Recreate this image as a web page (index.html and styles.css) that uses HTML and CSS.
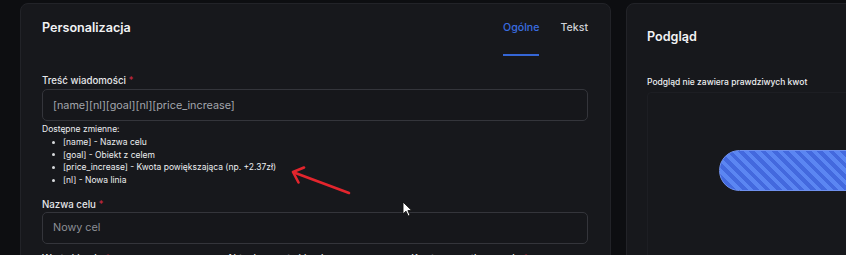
FILE: index.html
```html
<!DOCTYPE html>
<html lang="pl">
<head>
<meta charset="utf-8">
<title>Personalizacja</title>
<link rel="stylesheet" href="styles.css">
</head>
<body>
<div class="layout">
  <section class="card card-main">
    <header class="card-head">
      <h2 class="title">Personalizacja</h2>
      <nav class="tabs">
        <span class="tab tab-active">Ogólne</span>
        <span class="tab">Tekst</span>
      </nav>
    </header>

    <div class="field">
      <label class="label">Treść wiadomości <span class="req">*</span></label>
      <div class="input">[name][nl][goal][nl][price_increase]</div>
    </div>

    <div class="vars">
      <div class="vars-title">Dostępne zmienne:</div>
      <ul class="vars-list">
        <li>[name] - Nazwa celu</li>
        <li>[goal] - Obiekt z celem</li>
        <li>[price_increase] - Kwota powiększająca (np. +2.37zł)</li>
        <li>[nl] - Nowa linia</li>
      </ul>
    </div>

    <div class="field field-name">
      <label class="label">Nazwa celu <span class="req">*</span></label>
      <div class="input input-placeholder">Nowy cel</div>
    </div>

    <div class="row3">
      <label class="label">Wartość celu <span class="req">*</span></label>
      <label class="label">Aktualna wartość celu</label>
      <label class="label">Kwota początkowa celu <span class="req">*</span></label>
    </div>

    <svg class="annot-arrow" width="70" height="32" viewBox="0 0 70 32">
      <path d="M63 27 L8 6.5" stroke="#e3252d" stroke-width="2.6" stroke-linecap="round" fill="none"/>
      <path d="M18 1.5 L7 6 L12.5 16.5" stroke="#e3252d" stroke-width="2.6" stroke-linecap="round" stroke-linejoin="round" fill="none"/>
    </svg>
    <svg class="cursor" width="11" height="16" viewBox="0 0 11 16">
      <path d="M1 1 L1 13 L4 10.2 L6.2 15 L8 14.2 L5.9 9.6 L9.8 9.6 Z" fill="#ffffff" stroke="#111" stroke-width="0.9" stroke-linejoin="round"/>
    </svg>
  </section>

  <section class="card card-preview">
    <h2 class="title">Podgląd</h2>
    <p class="preview-note">Podgląd nie zawiera prawdziwych kwot</p>
    <div class="preview-box">
      <div class="progress"></div>
    </div>
  </section>
</div>
</body>
</html>
```

FILE: styles.css
```css
* { box-sizing: border-box; }

html, body {
  margin: 0;
  padding: 0;
  height: 255px;
  overflow: hidden;
  background: #0d0e11;
  font-family: Inter, "Noto Sans", "Liberation Sans", sans-serif;
  color: #e8e9ec;
}

.layout {
  display: flex;
  gap: 15px;
  padding: 3px 0 0 20px;
  width: 1100px;
}

.card {
  background: #17181c;
  border: 1px solid #222328;
  border-radius: 8px;
  height: 400px;
  flex: none;
}

.card-main {
  position: relative;
  width: 591px;
  padding: 15px 22px 0 21px;
}

.card-head {
  display: flex;
  justify-content: space-between;
  align-items: flex-start;
}

.title {
  margin: 0;
  font-size: 12.6px;
  line-height: 18px;
  font-weight: 600;
  color: #f1f2f4;
}

.tabs {
  display: flex;
  gap: 21px;
}

.tab {
  font-size: 10.6px;
  line-height: 18px;
  font-weight: 500;
  color: #cfd1d6;
  padding-bottom: 17px;
  border-bottom: 2px solid transparent;
}

.tab-active {
  color: #3a6de0;
  border-bottom-color: #3566d6;
}

.field {
  margin-top: 18px;
}

.field-name {
  margin-top: 11px;
}

.label {
  display: block;
  font-size: 9.7px;
  line-height: 14px;
  font-weight: 500;
  color: #e6e7ea;
  margin-bottom: 1px;
  white-space: nowrap;
}

.field-name .label { margin-bottom: 0; }

.req { color: #c4273f; }

.input {
  height: 32px;
  border: 1px solid #34353b;
  border-radius: 5px;
  background: #16171b;
  padding: 0 10px;
  display: flex;
  align-items: center;
  font-size: 10.8px;
  color: #a3a6ad;
}

.input-placeholder { color: #8c8f96; }

.vars {
  margin-top: 2px;
  font-size: 8.5px;
  line-height: 12.8px;
  color: #eceef0;
}

.vars-list {
  list-style: none;
  margin: 0;
  padding: 0;
}

.vars-list li {
  display: flex;
  align-items: center;
}

.vars-list li::before {
  content: "";
  width: 3px;
  height: 3px;
  border-radius: 50%;
  background: #d8dadd;
  margin: 0 8px 0 10px;
  flex: none;
}

.row3 {
  display: grid;
  grid-template-columns: repeat(3, 1fr);
  gap: 8px;
  margin-top: 8px;
}

.annot-arrow {
  position: absolute;
  left: 265px;
  top: 162px;
}

.cursor {
  position: absolute;
  left: 381px;
  top: 197px;
}

.card-preview {
  width: 420px;
  padding: 24px 0 0 20px;
}

.preview-note {
  margin: 30px 0 0;
  font-size: 8.5px;
  line-height: 12px;
  font-weight: 500;
  color: #eceef0;
}

.preview-box {
  margin-top: 4px;
  height: 200px;
  border: 1px solid #1d1e23;
  border-radius: 4px;
  background: #17181c;
  padding: 57px 0 0 71px;
}

.progress {
  width: 320px;
  height: 41px;
  border-radius: 21px;
  border: 1px solid #6f90ee;
  background: repeating-linear-gradient(45deg, #4369de 0 4px, #5b86f2 4px 8px);
}
```
